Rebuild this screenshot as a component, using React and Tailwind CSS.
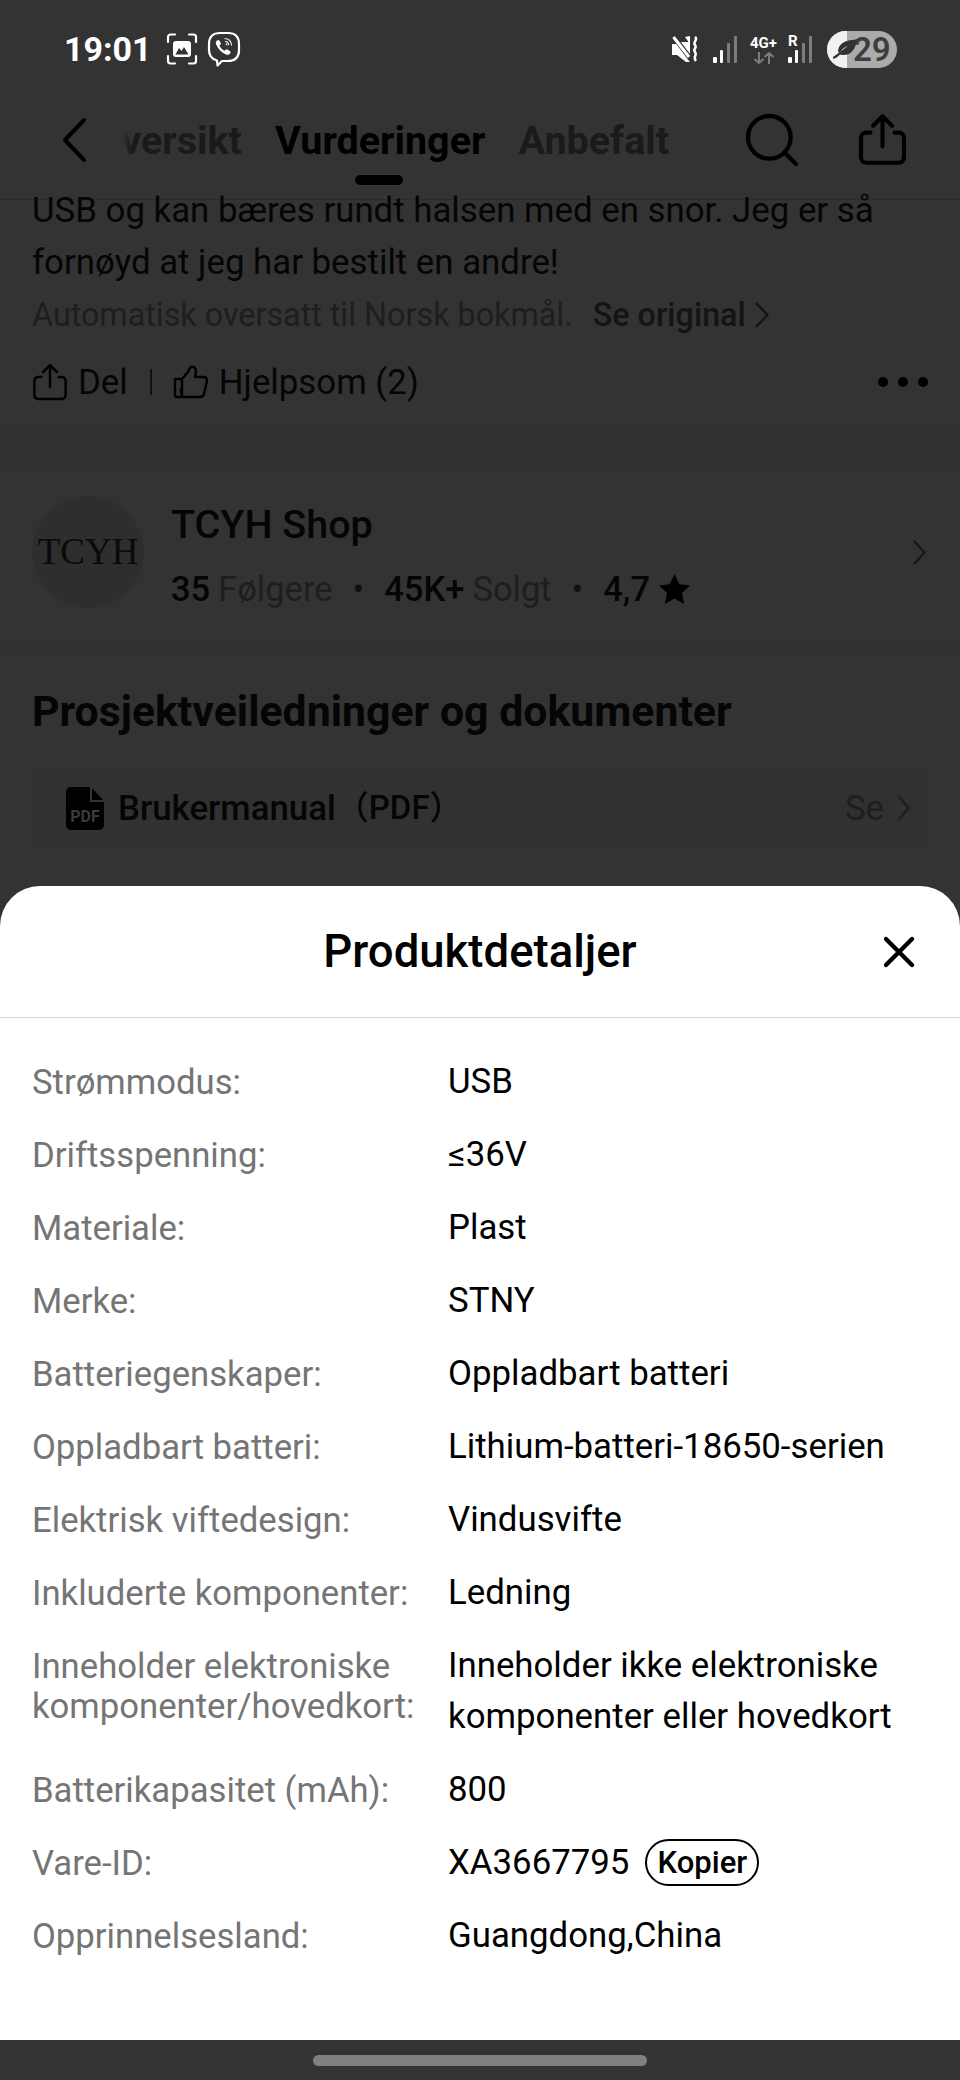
import React from "react";
import { Search, X } from "lucide-react";

const details = [
  ["Strømmodus:", "USB"],
  ["Driftsspenning:", "≤36V"],
  ["Materiale:", "Plast"],
  ["Merke:", "STNY"],
  ["Batteriegenskaper:", "Oppladbart batteri"],
  ["Oppladbart batteri:", "Lithium-batteri-18650-serien"],
  ["Elektrisk viftedesign:", "Vindusvifte"],
  ["Inkluderte komponenter:", "Ledning"],
];

const Bars = ({ lit }) => (
  <svg width="25" height="27" viewBox="0 0 25 27">
    {[
      [0, 21, 4, 6],
      [7, 14, 3, 13],
      [14, 7, 3, 20],
      [21, 0, 3, 27],
    ].map(([x, y, w, h], i) => (
      <rect key={i} x={x} y={y} width={w} height={h} rx="1" fill={i < lit ? "#fff" : "#7c7c7c"} />
    ))}
  </svg>
);

const ShareIcon = ({ size, stroke = 2.4 }) => (
  <svg width={size} height={size} viewBox="0 0 32 32" fill="none" stroke="#000" strokeWidth={stroke} strokeLinecap="round" strokeLinejoin="round">
    <path d="M9 12H6.500A3 3 0 0 0 3.500 15v11.500a3 3 0 0 0 3 3h19a3 3 0 0 0 3-3V15a3 3 0 0 0-3-3H23" />
    <path d="M16 20V3M10.500 8 16 2.500 21.500 8" />
  </svg>
);

const Chev = ({ w = 12, h = 24, color = "#181818", stroke = 2.400 }) => (
  <svg width={w} height={h} viewBox={`0 0 ${w} ${h}`} fill="none" stroke={color} strokeWidth={stroke} strokeLinecap="round" strokeLinejoin="round">
    <path d={`M1.500 1.500 ${w - 1.500} ${h / 2} 1.500 ${h - 1.500}`} />
  </svg>
);

const StatusBar = () => (
  <div className="flex h-[80px] items-center justify-between pl-[64px] pr-[63px] pt-[18px]">
    <div className="flex items-center">
      <span className="w-[102px] text-[34px] font-bold leading-none text-white">19:01</span>
      <svg width="32" height="32" viewBox="0 0 32 32" fill="none">
        <path d="M2 9V4a2.500 2.500 0 0 1 2.500-2.500H9M23 1.500h4.500A2.500 2.500 0 0 1 30 4v5M30 23v5a2.500 2.500 0 0 1-2.500 2.500H23M9 30.500H4.500A2.500 2.500 0 0 1 2 28v-5" stroke="#fff" strokeWidth="2.200" strokeLinecap="round" />
        <rect x="7" y="8" width="18" height="16" rx="3" fill="#fff" />
        <path d="M9.500 21.500 13 15l2.500 3 2.500-4 4.500 7.500z" fill="#333" />
      </svg>
      <svg className="ml-[9px]" width="34" height="36" viewBox="0 0 34 36" fill="none" stroke="#fff">
        <path d="M10 29.500C4.500 28 2 25 2 19v-6C2 6 6 2 13 2h8c7 0 11 4 11 11v6c0 7-4 11-11 11h-6l-4.500 4.500z" strokeWidth="2.200" strokeLinejoin="round" />
        <path d="M11 9c-2 .7-2.700 2.500-1.800 4.600 2 4.600 5.300 8 9.700 9.900 2 .8 3.700.2 4.500-1.500.4-.8.1-1.400-.6-1.900l-2.400-1.700c-.7-.4-1.300-.3-1.800.3l-.8 1c-2.500-1-4.300-2.800-5.400-5.300l1.100-.9c.5-.5.6-1.100.2-1.800L12.300 9.500c-.3-.5-.8-.7-1.300-.5z" fill="#fff" stroke="none" />
        <path d="M18 7.500c3.800.3 6.200 2.700 6.500 6.500M18.500 10.500c2 .2 3 1.300 3.200 3.200M19 13c.6.100.9.400 1 1" strokeWidth="1.100" strokeLinecap="round" />
      </svg>
    </div>
    <div className="flex items-center">
      <svg width="27" height="26" viewBox="0 0 27 26">
        <path d="M0 8h5l2-2 11 0v20H14L5 19H0z" fill="#fff" />
        <path d="M13 1 18 0v8z" fill="#fff" />
        <path d="M2 1 21 26" stroke="#333" strokeWidth="5" />
        <path d="M1.500 1 17 21" stroke="#fff" strokeWidth="3" />
        <path d="M23 1c3.500 2.500-2.500 5 0 8s-2.500 4 0 7-2.500 5 1 9" fill="none" stroke="#fff" strokeWidth="2.600" />
      </svg>
      <div className="ml-[14px]">
        <Bars lit={2} />
      </div>
      <div className="ml-[11px] flex w-[29px] flex-col items-center">
        <span className="text-[15px] font-bold leading-[17px] text-white">4G+</span>
        <svg width="22" height="12" viewBox="0 0 22 12" fill="none" stroke="#7c7c7c" strokeWidth="2">
          <path d="M6 0v11M1.500 7 6 11l4.500-4M16 12V1M11.500 5 16 1l4.500 4" />
        </svg>
      </div>
      <div className="relative ml-[10px] h-[27px] w-[25px]">
        <Bars lit={2} />
        <span className="absolute -top-[2px] left-0 text-[15px] font-bold leading-[15px] text-white">R</span>
      </div>
      <div className="relative ml-[14px] flex h-[37px] w-[70px] items-center overflow-hidden rounded-full bg-[#ababab]">
        <div className="h-full w-[20px] shrink-0 bg-[#f1f1f1]" />
        <svg className="absolute left-[5px] top-[7px]" width="26" height="24" viewBox="0 0 26 24">
          <path d="M1 21c3-1 5-2.500 7-4.500 7 2 15-1 17-15-8 .5-18 1.500-19 12l1.500 1.500C10 11 12 9.500 16 8c-5 3-9 7-15 11z" fill="#333" />
        </svg>
        <span className="ml-[6px] text-[33px] font-semibold leading-none text-[#3d3d3d]">29</span>
      </div>
    </div>
  </div>
);

const TopNav = () => (
  <div className="flex h-[120px] items-center border-b border-[#2c2c2c] bg-[#333]">
    <svg className="ml-[61px] shrink-0" width="26" height="46" viewBox="0 0 26 46" fill="none" stroke="#000" strokeWidth="4" strokeLinecap="round" strokeLinejoin="round">
      <path d="M23 3 4 23l19 20" />
    </svg>
    <div className="relative ml-[35px] h-[119px] w-[590px] overflow-hidden">
      <div className="absolute left-0 top-0 z-10 h-full w-[10px] bg-gradient-to-r from-[#333] to-transparent" />
      <div className="-ml-[28px] flex h-full items-center pt-[2px] text-[39.500px] font-bold">
        <span className="text-[#1a1a1a]">Oversikt</span>
        <div className="relative ml-[33px]">
          <span className="text-black">Vurderinger</span>
          <div className="absolute -bottom-[15px] left-[80px] h-[10px] w-[48px] rounded-full bg-black" />
        </div>
        <span className="ml-[33px] text-[#1a1a1a]">Anbefalt</span>
      </div>
    </div>
    <Search className="ml-[28px] h-[64px] w-[64px] shrink-0" color="#000" strokeWidth={1.600} />
    <div className="ml-[51px] shrink-0">
      <ShareIcon size={55} stroke={2.400} />
    </div>
  </div>
);

const Backdrop = () => (
  <div className="h-[886px] shrink-0 overflow-hidden bg-[#333]">
    <StatusBar />
    <TopNav />
    <div className="-mt-[16px] text-[34.800px] text-[#050505]">
      <div className="h-[240px] px-[32px]">
        <p className="leading-[52px]">USB og kan bæres rundt halsen med en snor. Jeg er så</p>
        <p className="leading-[52px]">fornøyd at jeg har bestilt en andre!</p>
        <div className="flex h-[54px] items-center text-[32.300px] text-[#1e1e1e]">
          <span>Automatisk oversatt til Norsk bokmål.</span>
          <span className="ml-[20px] font-medium text-[#141414]">Se original</span>
          <div className="ml-[9px]">
            <Chev w={14} h={26} color="#141414" />
          </div>
        </div>
        <div className="mt-[8px] flex h-[64px] items-center">
          <div className="-ml-[2px]">
            <ShareIcon size={40} stroke={2} />
          </div>
          <span className="ml-[8px]">Del</span>
          <div className="ml-[22px] h-[26px] w-[2px] bg-[#111]" />
          <svg className="ml-[21px]" width="36" height="34" viewBox="0 0 36 34" fill="none" stroke="#000" strokeWidth="2.400" strokeLinejoin="round">
            <path d="M2 14h7v18H4a2 2 0 0 1-2-2zM9 14l6-7c1-2 1-4 3-5 3-1 5 1 5 4l-1 6h9c2 0 3 2 3 4l-3 13c-.5 2-2 3-4 3H9" />
            <path d="M8 23v6" />
          </svg>
          <span className="ml-[10px]">Hjelpsom (2)</span>
          <div className="ml-auto flex gap-[10px]">
            <div className="h-[10px] w-[10px] rounded-full bg-black" />
            <div className="h-[10px] w-[10px] rounded-full bg-black" />
            <div className="h-[10px] w-[10px] rounded-full bg-black" />
          </div>
        </div>
      </div>
      <div className="h-[48px] bg-[#313131]" />
      <div className="flex h-[170px] items-center px-[32px] pb-[10px]">
        <div className="flex h-[112px] w-[112px] shrink-0 items-center justify-center rounded-full bg-[#2e2e2e] font-['Liberation_Serif',serif] text-[37px] text-[#0a0a0a]">
          TCYH
        </div>
        <div className="ml-[27px] pt-[10px]">
          <div className="text-[39.500px] font-medium leading-[48px]">TCYH Shop</div>
          <div className="mt-[16px] flex items-center text-[34.500px] leading-[48px]">
            <span className="font-medium">35</span>
            <span className="ml-[8px] text-[#1e1e1e]">Følgere</span>
            <span className="mx-[20px] text-[#111]">•</span>
            <span className="font-medium">45K+</span>
            <span className="ml-[8px] text-[#1e1e1e]">Solgt</span>
            <span className="mx-[20px] text-[#111]">•</span>
            <span className="font-medium">4,7</span>
            <svg className="ml-[9px]" width="31" height="30" viewBox="0 0 31 30">
              <path d="m15.500 0 4.800 10.200 10.700 1.300-8 7.500 2.200 11-9.700-5.500L5.800 30 8 19 0 11.500l10.700-1.300z" fill="#000" />
            </svg>
          </div>
        </div>
        <div className="ml-auto mr-[2px]">
          <Chev w={13} h={25} />
        </div>
      </div>
      <div className="h-[12px] bg-[#313131]" />
      <div className="px-[32px] pt-[32px]">
        <h2 className="text-[42.800px] font-bold leading-[50px]">Prosjektveiledninger og dokumenter</h2>
        <div className="mt-[31px] flex h-[82px] items-center rounded-[8px] bg-[#313131] pl-[34px] pr-[18px]">
          <div className="relative h-[43px] w-[38px] shrink-0">
            <svg width="38" height="43" viewBox="0 0 38 43">
              <path d="M5 0h20l13 14v24a5 5 0 0 1-5 5H5a5 5 0 0 1-5-5V5a5 5 0 0 1 5-5z" fill="#000" />
              <path d="M25 0v14h13" fill="none" stroke="#333" strokeWidth="2" />
            </svg>
            <span className="absolute bottom-[5px] left-0 w-full text-center text-[16px] font-bold leading-none text-[#3a3a3a]">PDF</span>
          </div>
          <span className="ml-[14px] font-medium">Brukermanual</span>
          <span className="font-['Roboto','Noto_Sans_CJK_SC',sans-serif] text-[33px] font-medium">（PDF）</span>
          <span className="ml-auto text-[#1e1e1e]">Se</span>
          <div className="ml-[14px]">
            <Chev w={12} h={24} color="#1e1e1e" />
          </div>
        </div>
      </div>
    </div>
  </div>
);

const Row = ({ label, children }) => (
  <div className="flex">
    <div className="w-[416px] shrink-0 pt-[6px] text-[34.700px] leading-[40px] text-[#757575]">{label}</div>
    <div className="text-[34.800px] leading-[51px] text-black">{children}</div>
  </div>
);

const Sheet = () => (
  <div className="flex flex-1 flex-col overflow-hidden rounded-t-[40px] bg-white">
    <div className="relative flex h-[132px] shrink-0 items-center justify-center border-b border-[#d8d8d8] pt-[2px]">
      <h1 className="text-[45.500px] font-medium text-black">Produktdetaljer</h1>
      <X className="absolute right-[35px] top-[40px] h-[52px] w-[52px]" color="#000" strokeWidth={2} />
    </div>
    <div className="flex flex-col gap-[22px] px-[32px] pt-[38px]">
      {details.map(([label, value]) => (
        <Row key={label} label={label}>
          {value}
        </Row>
      ))}
      <Row label={<>Inneholder elektroniske<br />komponenter/hovedkort:</>}>
        Inneholder ikke elektroniske
        <br />
        komponenter eller hovedkort
      </Row>
      <Row label="Batterikapasitet (mAh):">800</Row>
      <Row label="Vare-ID:">
        <div className="flex items-center">
          XA3667795
          <span className="ml-[16px] flex h-[47px] w-[114px] items-center justify-center rounded-full border-2 border-black text-[31px] font-medium leading-none">
            Kopier
          </span>
        </div>
      </Row>
      <Row label="Opprinnelsesland:">Guangdong,China</Row>
    </div>
  </div>
);

export default function App() {
  return (
    <div className="flex h-[2080px] w-[960px] flex-col overflow-hidden bg-[#333] font-['Roboto',sans-serif]">
      <Backdrop />
      <Sheet />
      <div className="flex h-[40px] shrink-0 items-center justify-center bg-[#333]">
        <div className="h-[11px] w-[334px] rounded-full bg-[#808080]" />
      </div>
    </div>
  );
}
